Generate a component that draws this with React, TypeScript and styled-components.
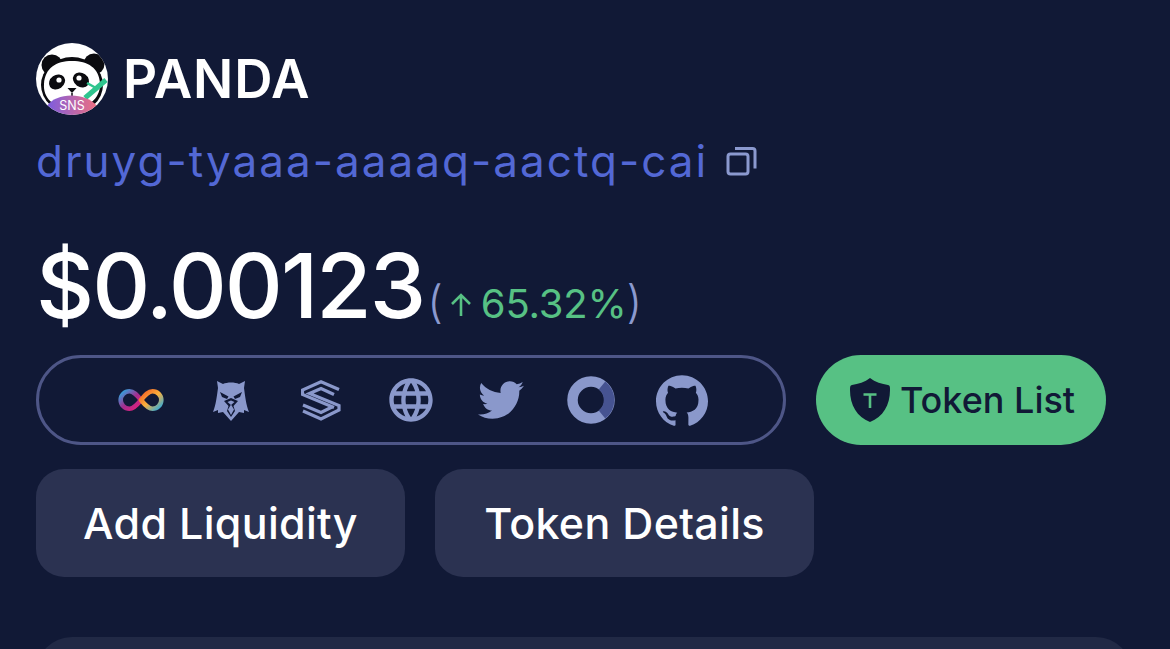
import React from "react";
import styled, { createGlobalStyle } from "styled-components";
import { FaTwitter } from "react-icons/fa";
import { MdLanguage } from "react-icons/md";
import { SiGithub } from "react-icons/si";

const Global = createGlobalStyle`
  html, body { margin: 0; padding: 0; background: #111936; overflow: hidden; }
  body { font-family: "Inter", "Liberation Sans", sans-serif; }
`;

const Page = styled.div`
  width: 1170px;
  height: 649px;
  box-sizing: border-box;
  padding: 43px 36px 0;
  background: #111936;
  overflow: hidden;
`;

const Header = styled.div`
  display: flex;
  align-items: center;
  gap: 15px;
  height: 72px;
`;

const Name = styled.h1`
  margin: 0;
  color: #fff;
  font-size: 53px;
  font-weight: 600;
  letter-spacing: 0.8px;
  line-height: 72px;
`;

const AddressRow = styled.div`
  display: flex;
  align-items: center;
  gap: 18px;
  margin-top: 19px;
  height: 54px;
`;

const Address = styled.span`
  color: #5368d5;
  font-size: 44px;
  font-weight: 400;
  letter-spacing: 2.03px;
  white-space: nowrap;
`;

const PriceRow = styled.div`
  display: flex;
  align-items: baseline;
  margin-top: 48px;
  height: 105px;
  line-height: 100px;
`;

const Price = styled.span`
  color: #fff;
  font-size: 90px;
  font-weight: 500;
  letter-spacing: -2px;
`;

const Change = styled.span`
  display: inline-flex;
  align-items: baseline;
  color: #8b99cf;
  font-size: 45px;
  font-weight: 300;
  margin-left: 3px;
`;

const Up = styled.span`
  color: #57c184;
  font-size: 40px;
  font-weight: 400;
  letter-spacing: -0.2px;
`;

const ArrowBox = styled.svg`
  width: 24px;
  height: 26px;
  margin: 0 8px 0 6px;
  align-self: center;
  position: relative;
  top: 2px;
`;

const LinkRow = styled.div`
  display: flex;
  align-items: center;
  gap: 30px;
  margin-top: 14px;
`;

const SocialPill = styled.div`
  box-sizing: border-box;
  width: 750px;
  height: 90px;
  border: 3px solid #4e5687;
  border-radius: 45px;
  display: flex;
  align-items: center;
  padding-left: 78px;
`;

const Slot = styled.a<{ $w: number }>`
  width: ${(p) => p.$w}px;
  flex: none;
  display: flex;
  justify-content: center;
  align-items: center;
  color: #8a98cb;
`;

const ListButton = styled.button`
  width: 290px;
  height: 90px;
  border: none;
  border-radius: 45px;
  background: #57c184;
  color: #111936;
  font-family: inherit;
  font-size: 36px;
  font-weight: 500;
  display: flex;
  align-items: center;
  justify-content: center;
  gap: 10px;
  padding: 0 0 0 3px;
`;

const ActionRow = styled.div`
  display: flex;
  gap: 30px;
  margin-top: 24px;
`;

const ActionButton = styled.button<{ $w: number }>`
  width: ${(p) => p.$w}px;
  height: 108px;
  border: none;
  border-radius: 28px;
  background: #2b3251;
  color: #fff;
  font-family: inherit;
  font-size: 43px;
  font-weight: 500;
  letter-spacing: 0.3px;
  padding: 0;
`;

const Card = styled.div`
  margin-top: 60px;
  width: 1096px;
  height: 120px;
  border-radius: 36px;
  background: #212945;
`;

const PandaLogo = () => (
  <svg width="72" height="72" viewBox="0 0 72 72">
    <defs>
      <linearGradient id="sns" x1="0" x2="1" y1="0" y2="0">
        <stop offset="0" stopColor="#7b5ce0" />
        <stop offset="1" stopColor="#ef6f80" />
      </linearGradient>
      <clipPath id="disc"><circle cx="36" cy="36" r="36" /></clipPath>
    </defs>
    <g clipPath="url(#disc)">
      <rect width="72" height="72" fill="#fff" />
      <circle cx="16" cy="22" r="10.500" fill="#0b0b0f" />
      <circle cx="58" cy="21" r="10.500" fill="#0b0b0f" />
      <ellipse cx="36" cy="42" rx="31" ry="28" fill="#0b0b0f" />
      <path d="M8 41 C9 25 20 18 36 18 C52 18 63 25 64 40 C65 52 56 65 36 65 C16 65 7 54 8 41Z" fill="#fff" />
      <ellipse cx="21" cy="39" rx="8.500" ry="7" fill="#0b0b0f" transform="rotate(-35 21 39)" />
      <ellipse cx="45" cy="37" rx="8.500" ry="7" fill="#0b0b0f" transform="rotate(35 45 37)" />
      <circle cx="23" cy="37" r="2.600" fill="#fff" />
      <circle cx="43" cy="35" r="2.600" fill="#fff" />
      <path d="M31.500 45h9l-4.500 5z" fill="#0b0b0f" />
      <path d="M36 50v3" stroke="#0b0b0f" strokeWidth="1.500" />
      <path d="M49 55 L70 37" stroke="#2fc58e" strokeWidth="5" />
      <path d="M60 45 L51 40" stroke="#2fc58e" strokeWidth="2.400" />
      <path d="M11 63 C20 49 50 49 61 63 C52 77 21 77 11 63Z" fill="url(#sns)" />
      <text x="36" y="67" textAnchor="middle" fontFamily="Inter, sans-serif" fontSize="12.500" fill="#fff">SNS</text>
    </g>
  </svg>
);

const CopyIcon = () => (
  <svg width="32" height="32" viewBox="0 0 32 32" fill="none" stroke="#8b99cf" strokeWidth="3">
    <rect x="2" y="9" width="20" height="20" rx="2.500" />
    <path d="M9 3.500h17.500a2.500 2.500 0 0 1 2.500 2.500v17.500" />
  </svg>
);

const InfinityIcon = () => (
  <svg width="46" height="24" viewBox="0 0 48 26" fill="none" strokeWidth="5" strokeLinecap="round">
    <defs>
      <linearGradient id="il" x1="0" x2="1" y1="0" y2="1">
        <stop offset="0" stopColor="#29abe2" />
        <stop offset="0.5" stopColor="#a32d8f" />
        <stop offset="1" stopColor="#ed1e79" />
      </linearGradient>
      <linearGradient id="ir" x1="0" x2="1" y1="0" y2="1">
        <stop offset="0" stopColor="#f15a24" />
        <stop offset="0.5" stopColor="#fbb03b" />
        <stop offset="1" stopColor="#29abe2" />
      </linearGradient>
    </defs>
    <path d="M24 13 C19 7 16 3.500 11.500 3.500 A9.500 9.500 0 0 0 11.500 22.500 C16 22.500 20 18 24 13" stroke="url(#il)" />
    <path d="M24 13 C29 7 32 3.500 36.500 3.500 A9.500 9.500 0 0 1 36.500 22.500 C32 22.500 28 18 24 13" stroke="url(#ir)" />
  </svg>
);

const EagleIcon = () => (
  <svg width="36" height="42" viewBox="0 0 36 42" fill="#8a98cb">
    <path d="M4 2 L10 5 C14 3 22 3 26 5 L32 2 L31 9 C32 16 33 26 36 33 L31 31 L31 34 L26 33 L18 42 L10 33 L5 34 L5 31 L0 33 C3 26 4 16 5 9Z" />
    <path d="M7 13 L15.500 17.500 L14 20 L9 18Z M29 13 L20.500 17.500 L22 20 L27 18Z" fill="#111936" />
    <path d="M11 22 L18 19 L25 22 L20.500 27 L22 32 L18 38 L14 32 L15.500 27Z M14.500 23 L18 26 L21.500 23 L18 21.500Z" fill="#111936" fillRule="evenodd" />
    <path d="M18 25.500 L21 30.500 L18 36 L15 30.500Z" fill="#8a98cb" />
  </svg>
);

const StackS = () => (
  <svg width="40" height="41" viewBox="0 0 40 41" fill="none" stroke="#8a98cb" strokeWidth="3.200" strokeLinejoin="miter">
    <path d="M38 9.500 L20 1.800 L1.500 10 L1.500 14.500 L33 27.500" />
    <path d="M33 14.500 L20 8.500 L8.500 13.500 L38 25.500 L38 30 L20 39 L2 31" />
    <path d="M2 25 L20 32.500 L31 27" />
  </svg>
);

const DonutIcon = () => (
  <svg width="48" height="48" viewBox="0 0 48 48">
    <circle cx="24" cy="24" r="18.500" fill="none" stroke="#8a98cb" strokeWidth="10.500" />
    <path d="M35 9.500 A18.500 18.500 0 0 1 35 38.500" fill="none" stroke="#465391" strokeWidth="10.500" />
  </svg>
);

const ShieldIcon = () => (
  <svg width="40" height="46" viewBox="0 0 40 46">
    <path d="M20 1 C25 5 32 7 38 8 C40 8.500 40 10 40 13 C40 28 33 40 20 45 C7 40 0 28 0 13 C0 10 0 8.500 2 8 C8 7 15 5 20 1Z" fill="#111936" />
    <path d="M13.500 17.500 H26.500 M20 17.500 V31" stroke="#57c184" strokeWidth="2.600" fill="none" />
  </svg>
);

export default function App() {
  return (
    <Page>
      <Global />
      <Header>
        <PandaLogo />
        <Name>PANDA</Name>
      </Header>
      <AddressRow>
        <Address>druyg-tyaaa-aaaaq-aactq-cai</Address>
        <CopyIcon />
      </AddressRow>
      <PriceRow>
        <Price>$0.00123</Price>
        <Change>
          (
          <ArrowBox viewBox="0 0 24 26" fill="none" stroke="#57c184" strokeWidth="2.600">
            <path d="M12 24V3M3 12l9-9 9 9" />
          </ArrowBox>
          <Up>65.32%</Up>)
        </Change>
      </PriceRow>
      <LinkRow>
        <SocialPill>
          <Slot $w={48}><InfinityIcon /></Slot>
          <Slot $w={131}><EagleIcon /></Slot>
          <Slot $w={50}><StackS /></Slot>
          <Slot $w={130}><MdLanguage size={52} /></Slot>
          <Slot $w={50}><FaTwitter size={46} /></Slot>
          <Slot $w={130}><DonutIcon /></Slot>
          <Slot $w={52}><SiGithub size={53} /></Slot>
        </SocialPill>
        <ListButton>
          <ShieldIcon />
          Token List
        </ListButton>
      </LinkRow>
      <ActionRow>
        <ActionButton $w={369}>Add Liquidity</ActionButton>
        <ActionButton $w={379}>Token Details</ActionButton>
      </ActionRow>
      <Card />
    </Page>
  );
}
